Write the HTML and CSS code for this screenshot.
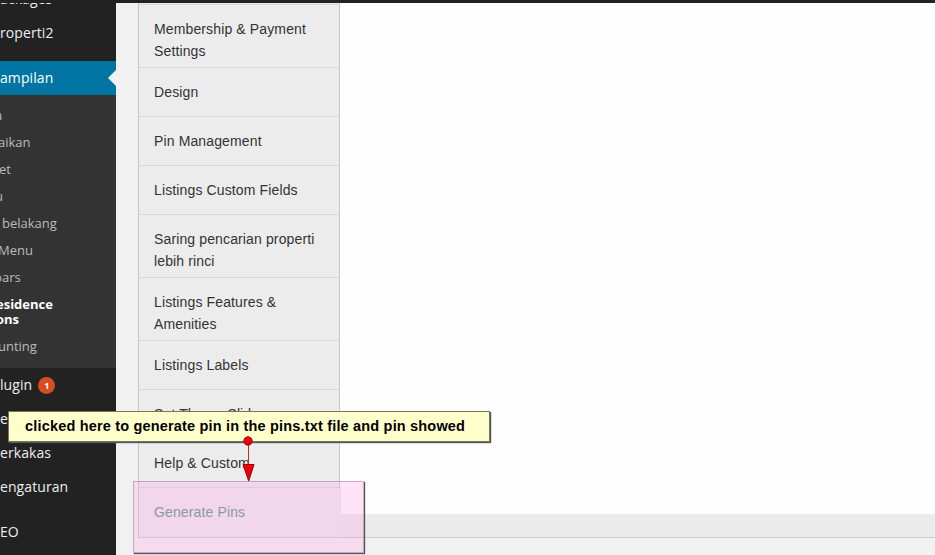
FILE: index.html
```html
<!DOCTYPE html>
<html lang="id">
<head>
<meta charset="utf-8">
<title>Theme Options</title>
<link rel="stylesheet" href="styles.css">
</head>
<body>
<div class="screen">
  <header class="topbar"></header>
  <div class="layout">
    <nav class="sidebar">
      <a class="item first">ackages</a>
      <a class="item">roperti2</a>
      <div class="gap"></div>
      <a class="item current">ampilan</a>
      <div class="submenu">
        <a class="sub cut-a">a</a>
        <a class="sub cut">aikan</a>
        <a class="sub near">et</a>
        <a class="sub cut-u">u</a>
        <a class="sub space">belakang</a>
        <a class="sub cut">Menu</a>
        <a class="sub cut-b">bars</a>
        <a class="sub selected">esidence<br>ons</a>
        <a class="sub cut">unting</a>
      </div>
      <a class="item">lugin <span class="badge">1</span></a>
      <a class="item">engguna</a>
      <a class="item">erkakas</a>
      <a class="item">engaturan</a>
      <div class="gap"></div>
      <a class="item">EO</a>
    </nav>
    <main class="main">
      <div class="panel">
        <ul class="tabs">
          <li class="tab start double">Membership &amp; Payment Settings</li>
          <li class="tab">Design</li>
          <li class="tab">Pin Management</li>
          <li class="tab">Listings Custom Fields</li>
          <li class="tab double">Saring pencarian properti lebih rinci</li>
          <li class="tab double">Listings Features &amp; Amenities</li>
          <li class="tab">Listings Labels</li>
          <li class="tab">Set Theme Slider</li>
          <li class="tab">Help &amp; Custom</li>
          <li class="tab active">Generate Pins</li>
        </ul>
        <div class="content"><div class="blank"></div><div class="bar"></div></div>
      </div>
    </main>
  </div>
  <div class="highlight"></div>
  <div class="callout">clicked here to generate pin in the pins.txt file and pin showed</div>
  <svg class="arrow" width="16" height="50" viewBox="0 0 16 50">
    <path d="M8.500 9V30" stroke="#c22a34" stroke-width="1"/>
    <circle cx="8" cy="6" r="4.2" fill="#ee0008" stroke="#9c0505"/>
    <path d="M3 29.500H14L8.700 46Z" fill="#ee0008" stroke="#9c0505"/>
  </svg>
</div>
</body>
</html>
```
FILE: styles.css
```css
* { box-sizing: border-box; }
body { margin: 0; background: #f1f1f1; }
.screen { position: relative; width: 935px; height: 555px; overflow: hidden; display: flex; flex-direction: column; }
.topbar { height: 3px; flex: none; background: #222; }
.layout { display: flex; flex: 1; min-height: 0; overflow: hidden; }
.sidebar { width: 116px; flex: none; background: #222; font-family: "Open Sans", sans-serif; color: #eee; overflow: hidden; }
.item { display: flex; align-items: center; height: 34px; font-size: 14px; line-height: 18px; letter-spacing: .08px; white-space: nowrap; }
.first { margin-top: -21px; }
.gap { height: 11px; }
.current { position: relative; background: #0074a2; color: #fff; }
.current::after { content: ""; margin-left: auto; border: 8px solid transparent; border-left: 0; border-right-color: #f1f1f1; }
.submenu { background: #333; padding: 7px 0 8px; }
.sub { display: block; padding: 6px 0; height: 27px; font-size: 13px; line-height: 15px; color: #bbb; white-space: nowrap; }
.near { margin-left: -1px; }
.cut { margin-left: -2px; }
.cut-a { margin-left: -5px; }
.cut-u { margin-left: -5px; }
.cut-b { margin-left: -6px; }
.space { padding-left: 2px; }
.selected { height: 42px; color: #fff; font-weight: 700; margin-left: -4px; }
.badge { width: 17px; height: 17px; margin-left: 6px; border-radius: 50%; background: #d54e21; color: #fff; font-size: 9px; font-weight: 700; line-height: 17px; text-align: center; }
.main { flex: 1; padding-left: 22px; }
.panel { display: flex; height: 535px; border-bottom: 1px solid #ccc; }
.tabs { width: 202px; flex: none; margin: 0; padding: 1px 0 0; list-style: none; background: #ececec; border: 1px solid #c8c8c8; border-width: 0 1px; }
.tab { height: 49px; padding: 13px 14px 0 15px; border-bottom: 1px solid #d8d8d8; font: 14px/22px "Liberation Sans", Arial, sans-serif; letter-spacing: .13px; color: #333; }
.double { height: 63px; }
.start { height: 64px; border-top: 1px solid #d8d8d8; }
.active { position: relative; color: #5f9590; border-bottom: 0; margin-right: -2px; background: #ececec; }
.content { flex: 1; display: flex; flex-direction: column; }
.blank { flex: 1; background: #fdfdfd; }
.bar { height: 23px; background: #ebebeb; }
.highlight { position: absolute; left: 133px; top: 481px; width: 231px; height: 72px; background: rgba(255,160,225,.27); border: 1px solid rgba(110,70,100,.35); box-shadow: 1px 1px 1px #555; }
.callout { position: absolute; left: 8px; top: 411px; width: 482px; height: 31px; padding-left: 16px; background: #ffffcc; border: 1px solid #77775f; box-shadow: 1px 1px 1px #555; font: bold 14.5px/28px "Liberation Sans", Arial, sans-serif; letter-spacing: .18px; color: #000; white-space: nowrap; }
.arrow { position: absolute; left: 240px; top: 435px; }
```
